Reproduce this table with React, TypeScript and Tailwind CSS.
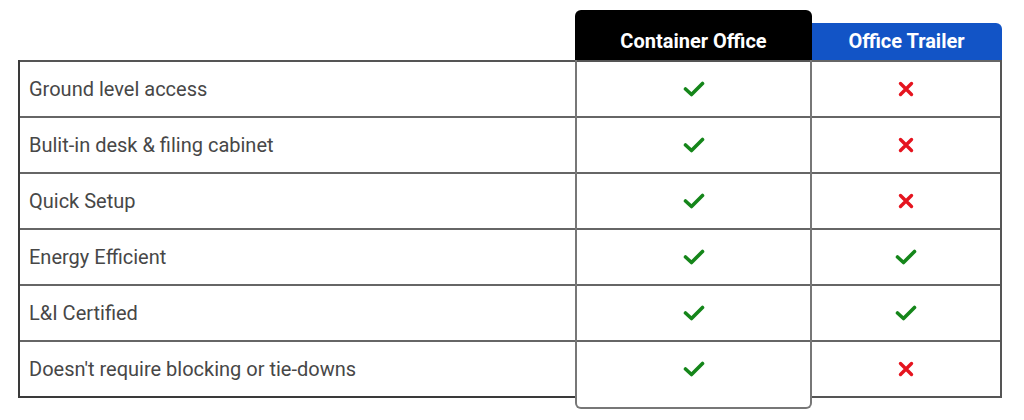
import React from 'react';

const rows = [
  { label: 'Ground level access', container: true, trailer: false },
  { label: 'Bulit-in desk & filing cabinet', container: true, trailer: false },
  { label: 'Quick Setup', container: true, trailer: false },
  { label: 'Energy Efficient', container: true, trailer: true },
  { label: 'L&I Certified', container: true, trailer: true },
  { label: "Doesn't require blocking or tie-downs", container: true, trailer: false },
];

function Check() {
  return (
    <svg width="22" height="16" viewBox="0 0 22 16">
      <polyline
        points="2.5,8 8.5,13.5 19.5,2.5"
        fill="none"
        stroke="#15861a"
        strokeWidth="3.6"
        strokeLinecap="round"
        strokeLinejoin="round"
      />
    </svg>
  );
}

function Cross() {
  return (
    <svg width="16" height="16" viewBox="0 0 16 16">
      <path
        d="M2.5 2.5 L13.5 13.5 M13.5 2.5 L2.5 13.5"
        fill="none"
        stroke="#e5141f"
        strokeWidth="3.4"
        strokeLinecap="round"
      />
    </svg>
  );
}

const Mark = ({ ok }: { ok: boolean }) => (ok ? <Check /> : <Cross />);

export default function App() {
  return (
    <div className="w-[1024px] h-[420px] bg-white overflow-hidden font-['Roboto',sans-serif]">
      <div className="flex items-start pt-[10px] pl-[18px]">
        {/* feature labels */}
        <div className="w-[558px] mt-[50px] border-l-2 border-b-2 border-[#3a3a3a]">
          {rows.map((r, i) => (
            <div
              key={r.label}
              className={`h-[56px] flex items-center pl-[9px] text-[20px] text-[#474747] border-t-2 ${
                i === 0 ? 'border-[#555]' : 'border-[#666]'
              }`}
            >
              {r.label}
            </div>
          ))}
        </div>

        {/* container office column */}
        <div className="w-[237px] -ml-[1px] relative z-10">
          <div className="h-[50px] bg-black rounded-t-[6px] flex items-end justify-center pb-[4px] text-white text-[20px] font-bold">
            Container Office
          </div>
          <div className="bg-white border-x-2 border-b-2 border-[#777] rounded-b-[6px] pb-[11px]">
            {rows.map((r) => (
              <div
                key={r.label}
                className="h-[56px] flex items-center justify-center border-t-2 border-[#666] first:border-[#555]"
              >
                <Mark ok={r.container} />
              </div>
            ))}
          </div>
        </div>

        {/* office trailer column */}
        <div className="w-[191px] mt-[13px] -ml-[1px]">
          <div className="h-[37px] bg-[#1254c6] rounded-tr-[6px] flex items-end justify-center pb-[4px] text-white text-[20px] font-bold">
            Office Trailer
          </div>
          <div className="border-r-2 border-b-2 border-[#555]">
            {rows.map((r) => (
              <div
                key={r.label}
                className="h-[56px] flex items-center justify-center border-t-2 border-[#666]"
              >
                <Mark ok={r.trailer} />
              </div>
            ))}
          </div>
        </div>
      </div>
    </div>
  );
}
